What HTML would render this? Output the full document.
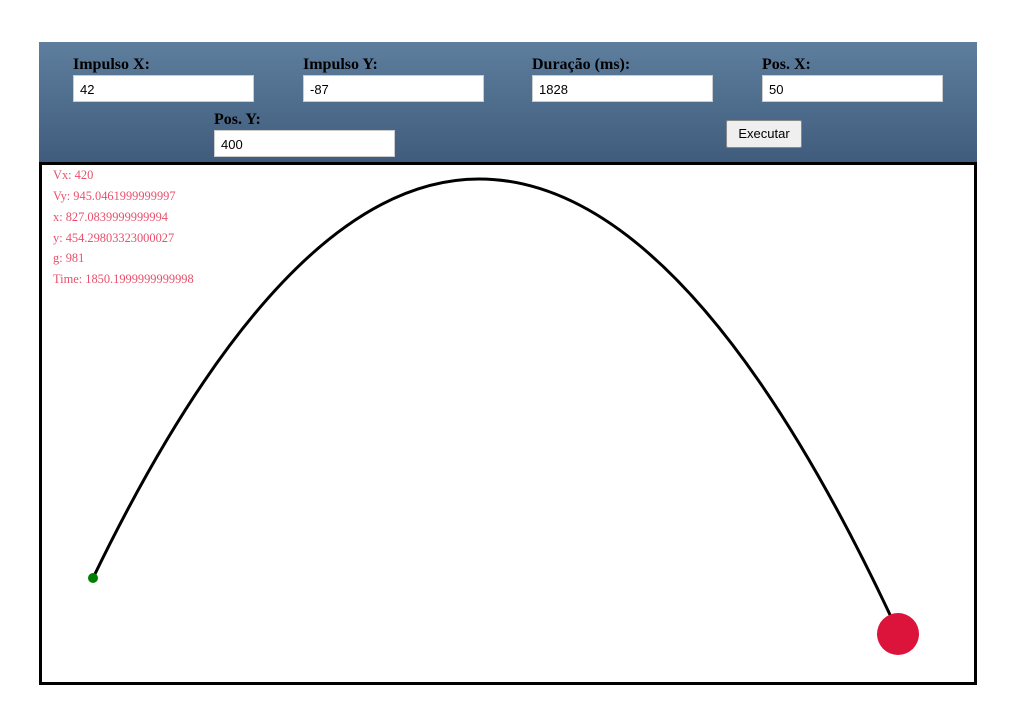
<!DOCTYPE html>
<html><head><style>
body{margin:0;background:#fff;width:1026px;height:728px;position:relative;overflow:hidden}
#hdr{position:absolute;left:39px;top:42px;width:938px;height:121px;background:linear-gradient(#5e7e9e,#405c7c)}
.l{position:absolute;font:bold 16px "Liberation Serif",serif;color:#000}
.i{position:absolute;background:#fff;border:1px solid #ccc;font:13px "Liberation Sans",sans-serif;line-height:28px;padding-left:6px;box-sizing:border-box;width:181px;height:27px}
#btn{position:absolute;left:726px;top:120px;width:76px;height:28px;box-sizing:border-box;background:#efefef;border:1px solid #888;border-radius:2px;font:13px "Liberation Sans",sans-serif;text-align:center;line-height:26px}
#cv{position:absolute;left:39px;top:162px;width:938px;height:523px;box-sizing:border-box;border:3px solid #000}
.s{position:absolute;left:53px;font:12.4px "Liberation Serif",serif;color:#e8506c}
</style></head><body>
<div id="hdr"></div>
<div class="l" style="left:73px;top:56px">Impulso X:</div>
<div class="i" style="left:73px;top:75px">42</div>
<div class="l" style="left:303px;top:56px">Impulso Y:</div>
<div class="i" style="left:303px;top:75px">-87</div>
<div class="l" style="left:532px;top:56px">Duração (ms):</div>
<div class="i" style="left:532px;top:75px">1828</div>
<div class="l" style="left:762px;top:56px">Pos. X:</div>
<div class="i" style="left:762px;top:75px">50</div>
<div class="l" style="left:214px;top:111px">Pos. Y:</div>
<div class="i" style="left:214px;top:130px">400</div>
<div id="btn">Executar</div>
<div id="cv"></div>
<svg style="position:absolute;left:0;top:0" width="1026" height="728">
<path d="M93 578 Q286 179 479 179 Q689 179 899 634" fill="none" stroke="#000" stroke-width="3"/>
<circle cx="93" cy="578" r="5" fill="#008000"/>
<circle cx="898" cy="634" r="21" fill="#dc143c"/>
</svg>
<div class="s" style="top:168px">Vx: 420</div>
<div class="s" style="top:189px">Vy: 945.0461999999997</div>
<div class="s" style="top:210px">x: 827.0839999999994</div>
<div class="s" style="top:231px">y: 454.29803323000027</div>
<div class="s" style="top:251px">g: 981</div>
<div class="s" style="top:272px">Time: 1850.1999999999998</div>
</body></html>
